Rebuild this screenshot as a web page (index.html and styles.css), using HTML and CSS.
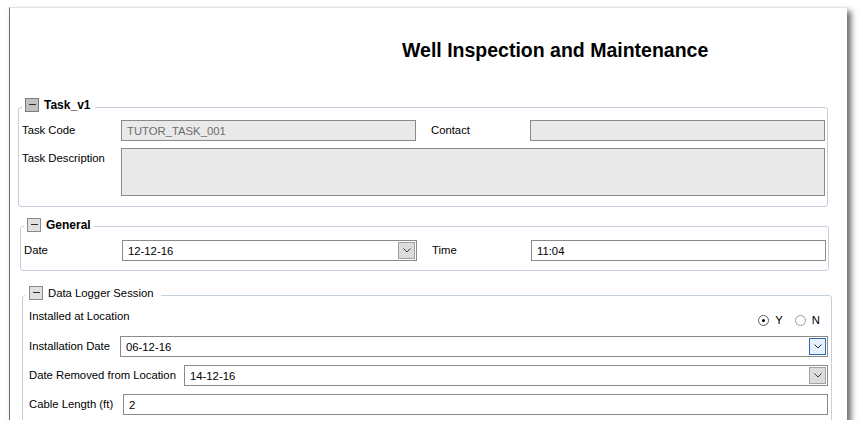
FILE: index.html
```html
<!DOCTYPE html>
<html>
<head>
	<meta charset="UTF-8">
	<title>Well Inspection and Maintenance</title>
	<link rel="stylesheet" href="styles.css">
</head>
<body>
	<div class="wnd">
		<h1 class="ttl">Well Inspection and Maintenance</h1>

		<fieldset class="grp grp-task">
			<legend class="ghd"><span class="tgl tgl-on"></span><span class="gtx gtx-b">Task_v1</span></legend>
			<div class="frm frm-task">
				<span class="lbl">Task Code</span>
				<div class="box off">TUTOR_TASK_001</div>
				<span class="lbl c4">Contact</span>
				<div class="box off"></div>
				<span class="lbl top">Task Description</span>
				<div class="box off memo"></div>
			</div>
		</fieldset>

		<fieldset class="grp grp-gen">
			<legend class="ghd"><span class="tgl"></span><span class="gtx gtx-b">General</span></legend>
			<div class="frm frm-gen">
				<span class="lbl">Date</span>
				<div class="box cmb"><span>12-12-16</span><span class="drp"><svg width="8" height="5" viewBox="0 0 8 5"><polyline points="0.5,0.5 4,4 7.5,0.5" fill="none" stroke="#3a3a3a" stroke-width="1"/></svg></span></div>
				<span class="lbl c4">Time</span>
				<div class="box">11:04</div>
			</div>
		</fieldset>

		<fieldset class="grp grp-dl">
			<legend class="ghd"><span class="tgl"></span><span class="gtx">Data Logger Session</span></legend>
			<div class="rows">
				<div class="rw-chk">
					<span class="lbl">Installed at Location</span>
					<div class="rads">
						<span class="rad chk"></span><span class="rtx">Y</span>
						<span class="rad"></span><span class="rtx">N</span>
					</div>
				</div>
				<div class="rw w-inst">
					<span class="lbl">Installation Date</span>
					<div class="box cmb"><span>06-12-16</span><span class="drp hot"><svg width="8" height="5" viewBox="0 0 8 5"><polyline points="0.5,0.5 4,4 7.5,0.5" fill="none" stroke="#2a2a2a" stroke-width="1"/></svg></span></div>
				</div>
				<div class="rw w-rem">
					<span class="lbl">Date Removed from Location</span>
					<div class="box cmb"><span>14-12-16</span><span class="drp"><svg width="8" height="5" viewBox="0 0 8 5"><polyline points="0.5,0.5 4,4 7.5,0.5" fill="none" stroke="#3a3a3a" stroke-width="1"/></svg></span></div>
				</div>
				<div class="rw w-cab">
					<span class="lbl">Cable Length (ft)</span>
					<div class="box">2</div>
				</div>
			</div>
		</fieldset>
	</div>
</body>
</html>
```

FILE: styles.css
```css
body { margin: 0; background: #FFF; color: #000; font-family: "Liberation Sans", Arial, sans-serif; font-size: 11.3px; }
.wnd { margin: 7px 0 0 9px; width: 838px; height: 413px; box-sizing: border-box; overflow: hidden; background: #FFF;
	border-left: 1px solid #6E6E6E; border-top: 1px solid #E4E4E4; box-shadow: 4px 4px 6px rgba(0,0,0,0.6); }
.ttl { margin: 0; padding: 30px 0 0 392px; font-size: 19.5px; line-height: 24px; font-weight: bold; white-space: nowrap; }

/* group boxes */
.grp { margin: 0; padding: 0; min-inline-size: 0; border: 1px solid #C4D0DC; border-radius: 3px; box-sizing: border-box; }
.grp-task { margin: 36px 0 0 8px; width: 810px; padding: 4px 2px 10px 3px; }
.grp-gen { margin: 11px 0 0 10px; width: 809px; padding: 5px 2px 9px 3px; }
.grp-dl { margin: 15px 0 0 12px; width: 810px; padding: 0 3px 80px 6px; }
.ghd { display: flex; align-items: flex-start; box-sizing: border-box; padding: 0 5px 0 3px; height: 18px; }
.grp-gen .ghd { height: 17px; padding: 0 3px 0 3px; }
.grp-dl .ghd { margin-left: -4px; padding: 0 7px 0 4px; }
.tgl { position: relative; width: 14px; height: 14px; box-sizing: border-box; border: 1px solid #8A8A8A; background: #E1E1E1; margin-right: 5px; flex: none; }
.tgl-on { border-color: #7C7C7C; background: #C2C2C2; }
.tgl::after { content: ""; position: absolute; left: 3px; top: 5px; width: 7px; height: 1px; background: #2E2E2E; }
.gtx { line-height: 15px; font-size: 11.3px; }
.gtx-b { font-weight: bold; font-size: 12px; line-height: 14px; }

/* form grids */
.frm { display: grid; row-gap: 7px; align-items: center; }
.frm-task { grid-template-columns: 99px 295px 15px 99px 295px; }
.frm-gen { grid-template-columns: 98px 295px 15px 99px 295px; }
.c4 { grid-column: 4; }
.lbl { white-space: nowrap; line-height: 13px; }
.lbl.top { align-self: start; padding-top: 4px; }

.box { height: 21px; box-sizing: border-box; border: 1px solid #8A8A8A; background: #FFF; padding: 0 5px; display: flex; align-items: center; white-space: nowrap; }
.box.off { background: #E9E9E9; color: #6D6D6D; }
.box.memo { grid-column: 2 / 6; height: 48px; }
.cmb { padding: 1px 1px 1px 5px; align-items: stretch; }
.cmb > span:first-child { display: flex; align-items: center; }
.drp { margin-left: auto; width: 17px; box-sizing: border-box; border: 1px solid #A2A2A2; background: #DCDCDC; display: flex; align-items: center; justify-content: center; }
.drp.hot { border-color: #2F68B5; background: #E5F1FB; }

/* data logger rows */
.rows { display: flex; flex-direction: column; gap: 8px; }
.rw-chk { display: flex; justify-content: space-between; height: 24px; }
.rw-chk .lbl { padding-top: 6px; }
.rads { display: flex; align-items: center; padding-top: 11px; height: 11px; margin-right: 8px; }
.rad { position: relative; width: 11px; height: 11px; box-sizing: border-box; border: 1px solid #9A9A9A; border-radius: 50%; background: #FFF; }
.rad.chk { border-color: #5C5C5C; }
.rad.chk::after { content: ""; position: absolute; left: 3px; top: 3px; width: 3px; height: 3px; border-radius: 50%; background: #000; }
.rtx { margin-left: 6px; margin-right: 12px; line-height: 13px; }
.rtx:last-child { margin-right: 0; }
.rw { display: grid; align-items: center; }
.w-inst { grid-template-columns: 91px 1fr; }
.w-rem { grid-template-columns: 155px 1fr; }
.w-cab { grid-template-columns: 94px 1fr; }
```
